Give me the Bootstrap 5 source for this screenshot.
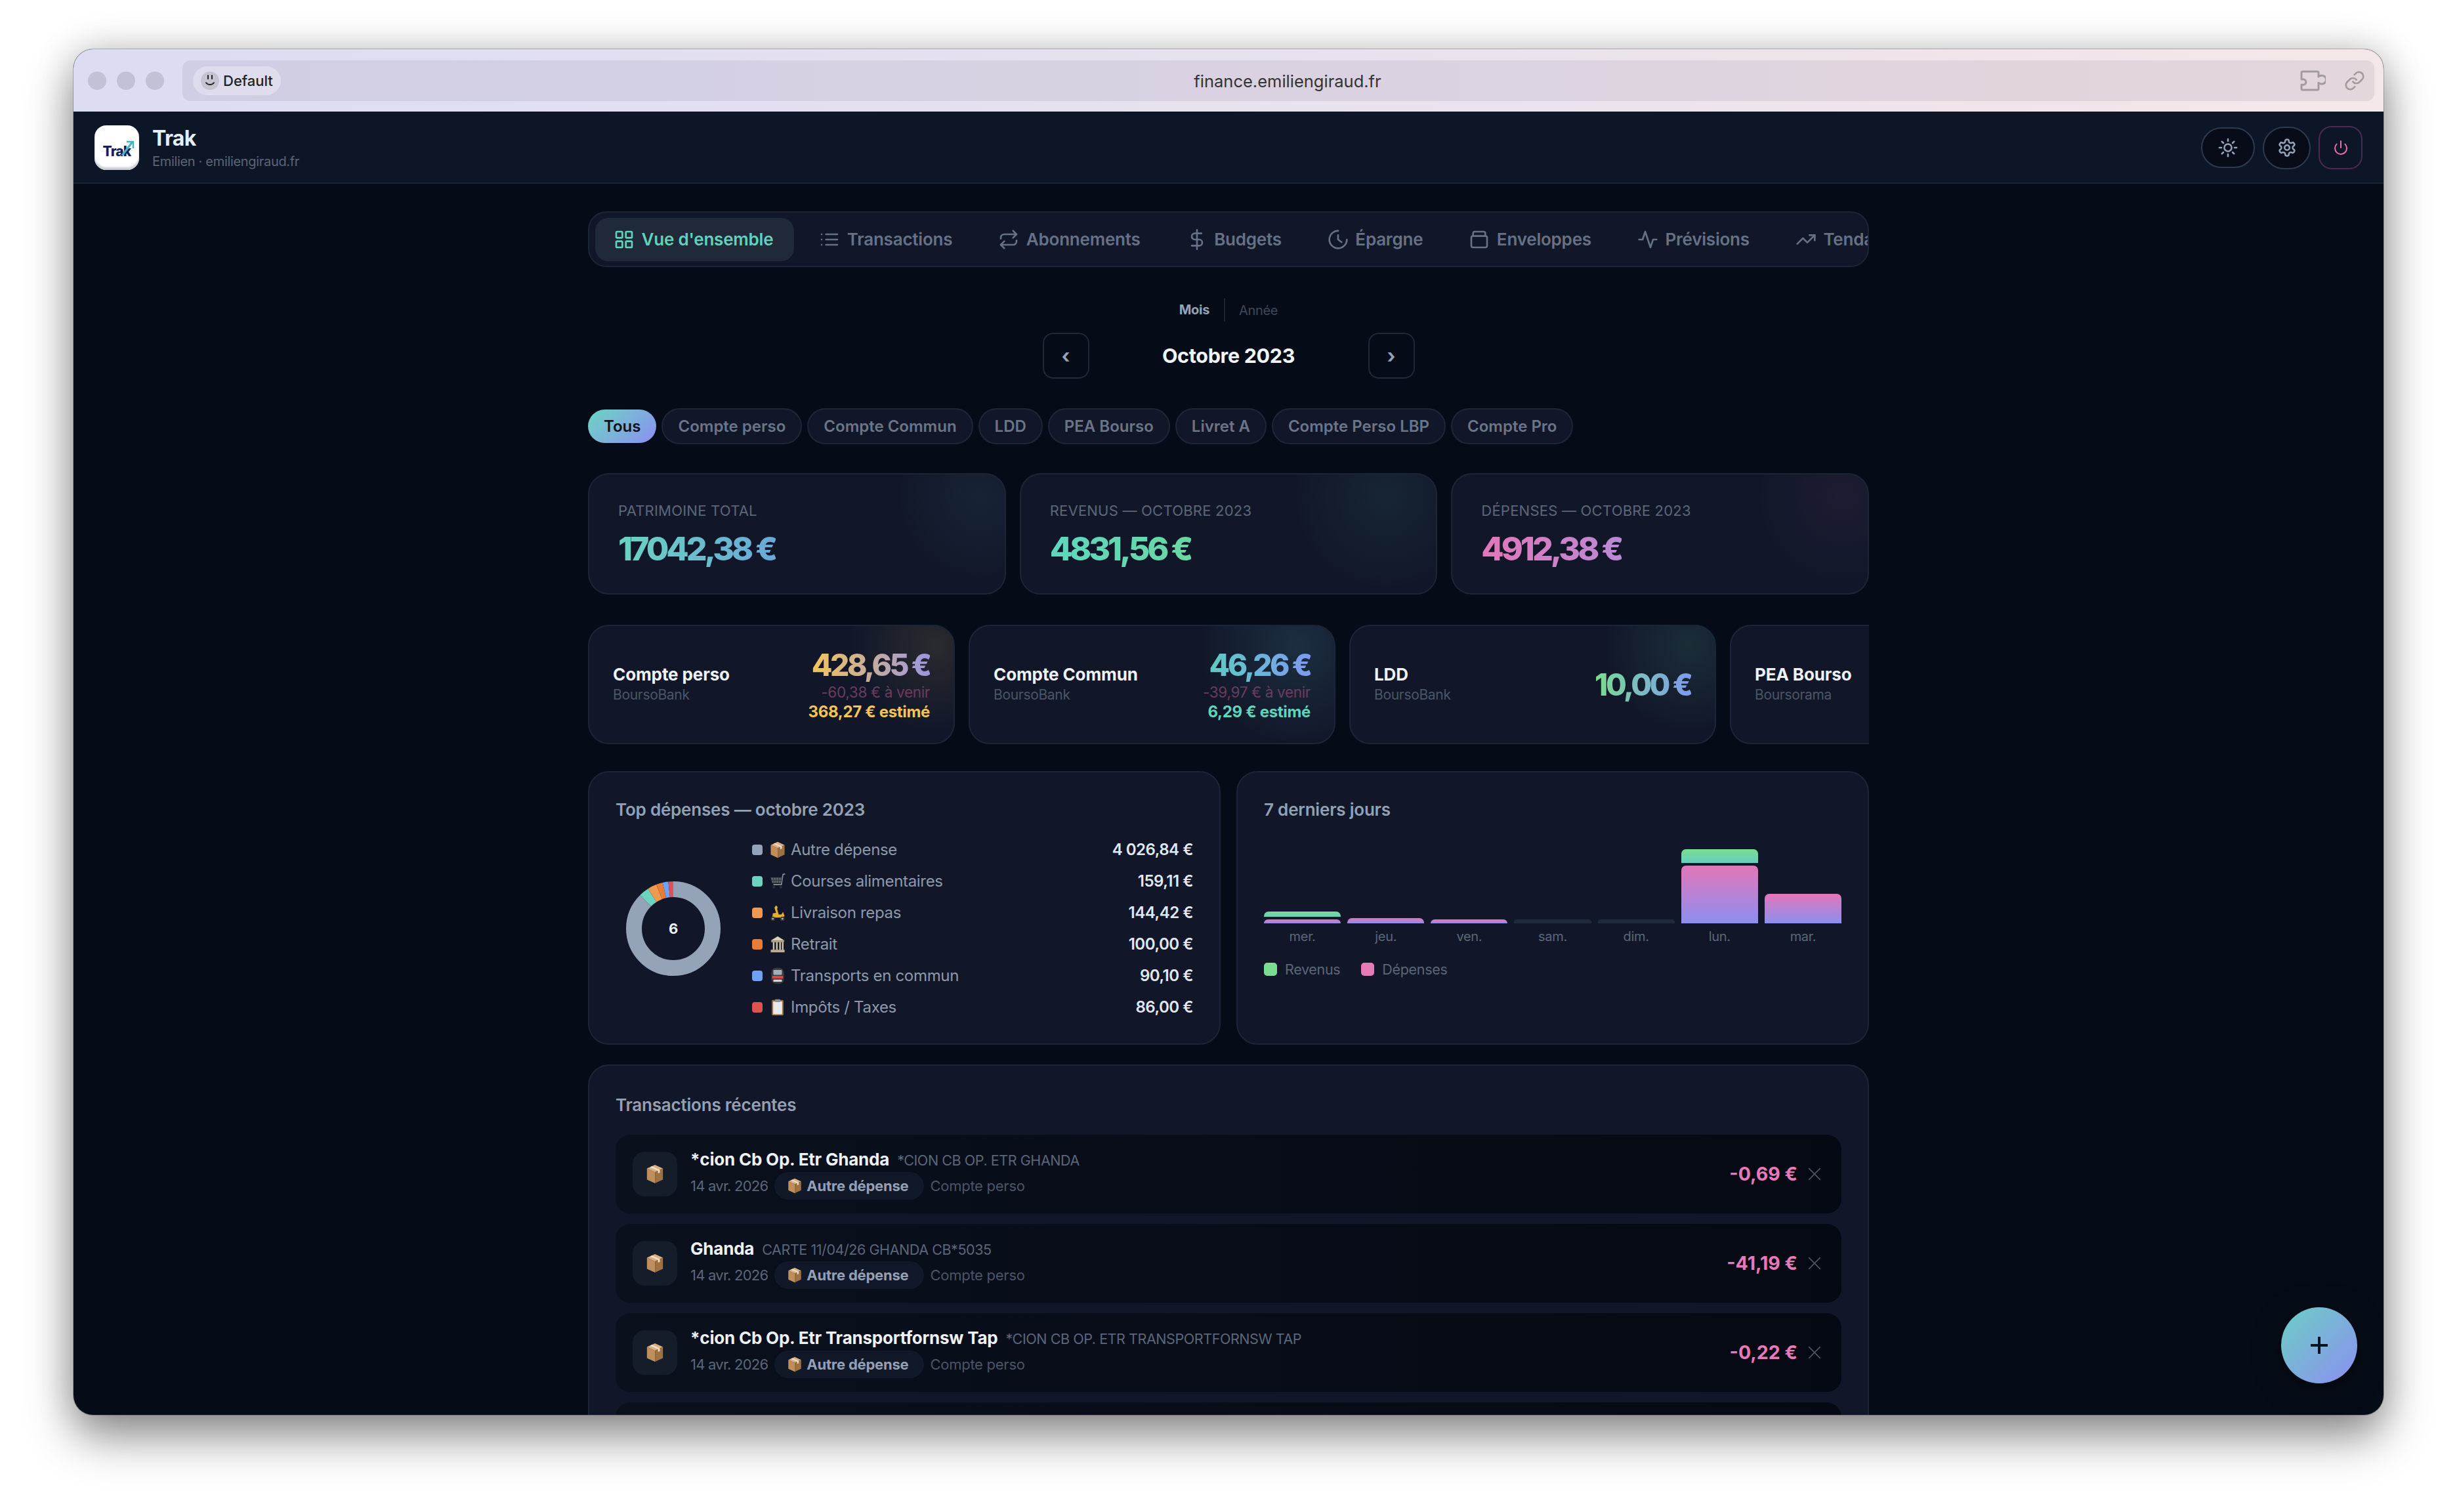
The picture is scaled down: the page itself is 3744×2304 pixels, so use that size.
<!DOCTYPE html>
<html lang="fr">
<head>
<meta charset="UTF-8">
<title>Trak</title>
<link href="https://cdn.jsdelivr.net/npm/bootstrap@5.3.0/dist/css/bootstrap.min.css" rel="stylesheet">
<style>
html, body { height: 2304px; overflow: hidden; background: #fff; }
body { font-family: Inter, "Noto Sans", sans-serif; color: #e2e8f0; letter-spacing: -0.02em; }
.ico { fill: none; stroke: currentColor; stroke-width: 2; stroke-linecap: round; stroke-linejoin: round; flex: none; }

.mac-window { width: 3520px; height: 2081px; margin: 75px auto 0; border-radius: 30px; overflow: hidden; position: relative; background: #060c17; box-shadow: 0 0 0 1px rgba(0,0,0,.22), 0 34px 70px rgba(0,0,0,.42), 0 0 60px rgba(0,0,0,.18); }
.mac-bar { height: 95px; padding: 17px 14px 16px 22px; background: linear-gradient(90deg, #dcdcf3, #f3e7e9); }
.mac-dots { gap: 16px; margin-right: 28px; }
.mac-dots i { width: 28px; height: 28px; border-radius: 50%; background: #c2c2d6; display: block; }
.mac-url { flex: 1; height: 62px; border-radius: 12px; background: rgba(120,110,140,.13); padding: 0 14px 0 16px; position: relative; }
.mac-profile { height: 44px; padding: 0 12px; border-radius: 22px; background: rgba(255,255,255,.3); color: #222; font-size: 22px; font-weight: 500; gap: 6px; letter-spacing: 0; }
.mac-face { width: 28px; height: 28px; border-radius: 50%; background: #c6c4d2; }
.mac-domain { position: absolute; left: 28px; right: 0; top: 16px; text-align: center; font-size: 25.5px; line-height: 32px; color: #333; letter-spacing: 0; }
.mac-tools { margin-left: auto; gap: 28px; color: #a29b9c; }

.app-head { height: 110px; padding: 2px 0 0; background: #0d1626; border-bottom: 2px solid #1b2435; }
.head-left { margin-left: 32px; }
.app-logo { width: 68px; height: 68px; border-radius: 18px; background: #fff; box-shadow: inset 0 -4px 3px #c9ccd2; position: relative; margin-right: 20px; color: #14205c; font-size: 21px; font-weight: 800; padding-top: 24px; text-align: center; letter-spacing: -.04em; }
.app-logo svg { position: absolute; right: 6px; top: 20px; }
.app-name { font-size: 32px; font-weight: 700; line-height: 38px; color: #e8edf5; letter-spacing: -.02em; }
.app-sub { font-size: 20px; line-height: 26px; margin-top: 3px; color: #5b6579; }
.head-tools { gap: 12px; margin-right: 32px; }
.head-btn { padding: 0; background: #070c18; border: 2px solid #2e3a4e; border-radius: 40px; color: #94a3b8; display: flex; align-items: center; justify-content: center; }
.head-sun { width: 82px; height: 62px; }
.head-gear { width: 73px; height: 65px; }
.head-power { width: 67px; height: 66px; border-radius: 20px; border-color: #4a2a50; background: transparent; color: #ec6fb3; }

.page-wrap { width: 1952px; margin: 0 auto; padding-top: 42px; }
.tab-bar { height: 85px; padding: 0 9px; background: #111729; border: 2px solid #1c2536; border-radius: 28px; overflow: hidden; flex-wrap: nowrap; gap: 10px; align-items: center; }
.tab-bar .nav-link { height: 66px; padding: 0 32px; border-radius: 20px; display: flex; align-items: center; gap: 14.5px; font-size: 26px; font-weight: 600; color: #677186; white-space: nowrap; flex: none; letter-spacing: -.008em; }
.tab-bar .nav-link svg { width: 32px; height: 32px; margin: 0 -4px; }
.tab-bar .nav-link.active { background: #1f2937; color: #5fd3bb; }

.period-switch { margin-top: 48px; height: 35px; font-size: 20px; }
.period-switch b { font-weight: 700; color: #94a3b8; padding-right: 22px; border-right: 2px solid #1c2536; line-height: 35px; }
.period-switch span { color: #3f4859; padding-left: 21px; }
.month-nav { margin-top: 17px; height: 70px; gap: 0; }
.month-btn { width: 71px; height: 70px; padding: 0; background: transparent; border: 2px solid #1f2938; border-radius: 16px; color: #94a3b8; font-size: 30px; font-weight: 700; line-height: 1; }
.month-title { width: 425px; text-align: center; font-size: 30.5px; font-weight: 700; color: #f1f5f9; }

.filter-row { margin-top: 45px; height: 55px; gap: 8px; }
.filter-pill { height: 55px; padding: 0 23px; background: #111729; border: 2px solid #1e2636; border-radius: 28px; color: #6b7588; font-size: 24px; font-weight: 600; white-space: nowrap; letter-spacing: 0; }
.filter-pill.on { height: 51px; padding: 0 24px; border: 0; color: #0b1220; background: linear-gradient(135deg, #6cd4c4, #8b90f0); }

.tile { background-color: #111729; border: 2px solid #1c2536; border-radius: 32px; color: inherit; }
.stat-grid { margin-top: 44px; display: grid; grid-template-columns: repeat(3, 1fr); gap: 21px; }
.stat-tile { height: 185px; padding: 2px 44px 0; justify-content: center; }
.stat-tile small { font-size: 22px; color: #5c6679; letter-spacing: .01em; line-height: 28px; }
.stat-val { font-size: 50px; font-weight: 800; letter-spacing: -.08em; line-height: 60px; margin-top: 14px; }
.grad-text { -webkit-background-clip: text; background-clip: text; color: transparent; display: inline-block; }
.g-teal { background-image: linear-gradient(90deg, #6ad3c0, #6aa8d8); }
.g-green { background-image: linear-gradient(90deg, #5fd6c0, #68d8a2); }
.g-pink { background-image: linear-gradient(90deg, #e476b8, #b98ad5); }
.g-gold { background-image: linear-gradient(90deg, #f2c45a, #9a96e0); }
.g-sea { background-image: linear-gradient(90deg, #5ecbc2, #7d9bf0); }
.g-leaf { background-image: linear-gradient(90deg, #7adc90, #7d9bf0); }
.glow-a { background-image: radial-gradient(circle 125px at 94% 19%, rgba(100,200,210,.07), transparent); }
.glow-b { background-image: radial-gradient(circle 140px at 88% 19%, rgba(100,220,180,.07), transparent); }
.glow-c { background-image: radial-gradient(circle 130px at 94% 19%, rgba(230,110,190,.06), transparent); }
.glow-d { background-image: radial-gradient(circle 130px at 95% 17%, rgba(245,200,90,.11), transparent); }
.glow-e { background-image: radial-gradient(circle 150px at 90% 17%, rgba(100,200,220,.13), transparent); }
.glow-f { background-image: radial-gradient(circle 130px at 93% 17%, rgba(110,220,170,.11), transparent); }

.acct-scroll { margin-top: 46px; gap: 21px; overflow: hidden; }
.acct-tile { width: 559px; height: 182px; flex: none; flex-direction: row; align-items: center; padding: 0 36px; }
.acct-name { font-size: 26px; font-weight: 700; line-height: 32px; color: #eef2f7; letter-spacing: -.004em; }
.acct-bank { font-size: 21px; line-height: 30px; color: #4b5567; }
.acct-vals { margin-left: auto; text-align: right; }
.acct-val { font-size: 46px; font-weight: 800; letter-spacing: -.075em; line-height: 54px; }
.acct-due { font-size: 22.5px; color: #6b3c5e; line-height: 30px; }
.acct-est { font-size: 24px; font-weight: 700; line-height: 30px; }

.chart-grid { margin-top: 41px; display: grid; grid-template-columns: repeat(2, 1fr); gap: 24px; }
.chart-tile { height: 417px; padding: 41px 40px 0; }
.tile-title { font-size: 26px; font-weight: 600; line-height: 32px; color: #94a0b3; letter-spacing: -.008em; }
.chart-body { margin-top: 21px; }
.donut-box { width: 144px; height: 144px; margin: 0 48px 0 16px; flex: none; }
.donut-box text { font-size: 22px; font-weight: 700; fill: #eef2f7; }
.cat-list { flex: 1; }
.cat-row { height: 48px; font-size: 24px; color: #8d98ab; }
.cat-swatch { width: 16px; height: 16px; border-radius: 4px; margin-right: 10px; flex: none; }
.cat-row svg { margin-right: 7px; flex: none; }
.cat-row b { margin-left: auto; font-weight: 600; color: #e2e8f0; letter-spacing: -.02em; }

.bars { height: 136px; margin-top: 21px; gap: 10px; align-items: flex-end; }
.bars > div { flex: 1; display: flex; flex-direction: column; gap: 4px; }
.bar-in { background: linear-gradient(180deg, #7adc90, #66cfc0); border-radius: 7px 7px 0 0; }
.bar-out { background: linear-gradient(180deg, #e476b8, #8b8ff0); border-radius: 7px 7px 0 0; }
.bar-none { background: #1e293b; border-radius: 4px 4px 0 0; }
.bar-labels { gap: 10px; margin-top: 8px; font-size: 20px; line-height: 24px; color: #5c6679; text-align: center; }
.bar-labels span { flex: 1; }
.bar-key { margin-top: 26px; font-size: 21.5px; color: #5c6679; line-height: 24px; }
.bar-key i { width: 20px; height: 20px; border-radius: 5px; margin-right: 12px; display: block; }
.bar-key span { margin-right: 32px; }

.recent-tile { margin-top: 30px; height: 700px; padding: 44px 40px 0; }
.recent-list { margin-top: 29px; gap: 16px; }
.tx-row { height: 120px; flex: none; padding: 0 31px 0 26px; background: linear-gradient(90deg, #0a101c, #050914); border-radius: 22px; }
.tx-icon { width: 68px; height: 68px; border-radius: 18px; background: #151c2a; margin-right: 20px; flex: none; }
.tx-name { font-size: 26px; font-weight: 700; line-height: 34px; color: #eef2f7; letter-spacing: -.008em; }
.tx-desc { font-size: 21.5px; color: #5c6679; margin-left: 12px; letter-spacing: -.02em; }
.tx-meta { font-size: 22px; color: #5c6679; margin-top: 1px; }
.tx-date { letter-spacing: -.035em; }
.tx-cat { height: 42px; padding: 0 24px 0 19px; margin: 0 9px 0 10px; border-radius: 21px; background: #111827; font-weight: 700; color: #94a0b3; gap: 6px; letter-spacing: -.01em; }
.tx-acct { color: #4b5567; letter-spacing: -.012em; }
.tx-amt { margin-left: auto; font-size: 28.5px; font-weight: 700; color: #e879b9; letter-spacing: 0; }
.tx-x { margin-left: 16px; color: #4b5563; }

.fab-add { position: absolute; right: 40px; bottom: 48px; width: 116px; height: 116px; padding: 0; border: 0; border-radius: 50%; color: #0b1220; background: linear-gradient(135deg, #6ccfc4, #8b8ff0); box-shadow: 0 8px 40px rgba(0,0,0,.5); }
</style>
</head>
<body>
<svg width="0" height="0" class="position-absolute">
  <symbol id="e-box" viewBox="0 0 32 32"><polygon points="16,1 29,7 16,13 3,7" fill="#dcb084"/><polygon points="3,7 16,13 16,31 3,25" fill="#c08e5b"/><polygon points="29,7 16,13 16,31 29,25" fill="#9e7143"/><polygon points="8,4.7 21,10.7 21,15 24,13.6 24,9.3 11,3.3" fill="#efe0c8"/><polygon points="16,13 18,12 18,31 16,31" fill="#8a6038" opacity=".5"/></symbol>
  <symbol id="e-cart" viewBox="0 0 32 32"><path d="M30 2l-4 1-3 19H8" fill="none" stroke="#8f949c" stroke-width="2"/><path d="M3 9h22l-2 10H6z" fill="#5f646c"/><path d="M8 9l1 10M13 9v10M18 9v10M23 9l-1 10M4 14h20" stroke="#2f333a" stroke-width="1.2"/><circle cx="9" cy="27" r="2.6" fill="#2c2f35"/><circle cx="22" cy="27" r="2.6" fill="#2c2f35"/></symbol>
  <symbol id="e-scoot" viewBox="0 0 32 32"><path d="M13 2l3 3-1 4 3 10h5l3-5 3 8c-3 3-12 3-17 3l-6-1 1-7 6-1-3-10z" fill="#e2b02e"/><circle cx="7" cy="27" r="4" fill="#3c3c3c"/><circle cx="25" cy="27" r="4" fill="#3c3c3c"/><circle cx="7" cy="27" r="1.6" fill="#bbb"/><circle cx="25" cy="27" r="1.6" fill="#bbb"/></symbol>
  <symbol id="e-bank" viewBox="0 0 32 32"><polygon points="16,1 29,9 3,9" fill="#d8cfb4"/><rect x="4" y="9" width="24" height="3" fill="#b9ae90"/><path d="M7 12h3v14H7zM13 12h3v14h-3zM19 12h3v14h-3zM24 12h3v14h-3z" fill="#cfc5a8"/><rect x="3" y="26" width="26" height="5" fill="#b9ae90"/></symbol>
  <symbol id="e-metro" viewBox="0 0 32 32"><rect x="4" y="1" width="24" height="30" rx="9" fill="#3a3a3e"/><rect x="8" y="5" width="16" height="9" rx="1.5" fill="#9fb0bd"/><rect x="6" y="16" width="20" height="5" fill="#d9473f"/><rect x="8" y="23" width="16" height="4" rx="1" fill="#d5d5d5"/></symbol>
  <symbol id="e-clip" viewBox="0 0 32 32"><rect x="5" y="2" width="22" height="29" rx="2" fill="#9a6e3f"/><rect x="7.5" y="5" width="17" height="24" fill="#e6e8ea"/><rect x="11" y="1" width="10" height="5" rx="1" fill="#8d9097"/></symbol>
  <symbol id="i-x" viewBox="0 0 24 24"><path d="M2 2l20 20M22 2L2 22"/></symbol>
</svg>

<div class="mac-window">
  <div class="mac-bar d-flex align-items-stretch">
    <div class="mac-dots d-flex align-items-center"><i></i><i></i><i></i></div>
    <div class="mac-url d-flex align-items-center">
      <div class="mac-profile d-flex align-items-center">
        <span class="mac-face d-flex align-items-center justify-content-center">
          <svg width="18" height="20" viewBox="0 0 18 20" fill="none" stroke="#222" stroke-width="2" stroke-linecap="round"><path d="M6 2v5M12 2v5M3 13c3 4 9 4 12 0"/></svg>
        </span>
        Default
      </div>
      <div class="mac-domain">finance.emiliengiraud.fr</div>
      <div class="mac-tools d-flex align-items-center">
        <svg width="40" height="32" viewBox="0 0 40 32" fill="none" stroke="currentColor" stroke-width="3" stroke-linejoin="round"><path d="M3 4a2 2 0 0 1 2-2h22a2 2 0 0 1 2 2v6c1-1 3-2 5-2a6 6 0 0 1 0 13c-2 0-4-1-5-2v9a2 2 0 0 1-2 2H5a2 2 0 0 1-2-2v-6c4 1 7-1 7-4s-3-5-7-4z"/></svg>
        <svg class="ico" width="32" height="32" viewBox="0 0 24 24"><path d="M10 13a5 5 0 0 0 7.54.54l3-3a5 5 0 0 0-7.07-7.07l-1.72 1.71"/><path d="M14 11a5 5 0 0 0-7.54-.54l-3 3a5 5 0 0 0 7.07 7.07l1.71-1.71"/></svg>
      </div>
    </div>
  </div>

  <header class="app-head navbar flex-nowrap">
    <div class="head-left d-flex align-items-center">
      <div class="app-logo">Trak
        <svg width="24" height="28" viewBox="0 0 24 28" fill="none" stroke="#3fb6c4" stroke-width="3"><path d="M4 26L20 5"/><path d="M11 5h10v10" stroke-width="2.5"/></svg>
      </div>
      <div>
        <div class="app-name">Trak</div>
        <div class="app-sub">Emilien · emiliengiraud.fr</div>
      </div>
    </div>
    <div class="head-tools d-flex align-items-center">
      <button class="btn head-btn head-sun" aria-label="Thème"><svg class="ico" width="30" height="30" viewBox="0 0 24 24"><circle cx="12" cy="12" r="4.5"/><path d="M12 1.5v2.5M12 20v2.5M1.5 12H4M20 12h2.5M4.6 4.6l1.8 1.8M17.6 17.6l1.8 1.8M4.6 19.4l1.8-1.8M17.6 6.4l1.8-1.8"/></svg></button>
      <button class="btn head-btn head-gear" aria-label="Réglages"><svg class="ico" width="30" height="30" viewBox="0 0 24 24"><path d="M12.22 2h-.44a2 2 0 0 0-2 2v.18a2 2 0 0 1-1 1.73l-.43.25a2 2 0 0 1-2 0l-.15-.08a2 2 0 0 0-2.73.73l-.22.38a2 2 0 0 0 .73 2.73l.15.1a2 2 0 0 1 1 1.72v.51a2 2 0 0 1-1 1.74l-.15.09a2 2 0 0 0-.73 2.73l.22.38a2 2 0 0 0 2.73.73l.15-.08a2 2 0 0 1 2 0l.43.25a2 2 0 0 1 1 1.73V20a2 2 0 0 0 2 2h.44a2 2 0 0 0 2-2v-.18a2 2 0 0 1 1-1.73l.43-.25a2 2 0 0 1 2 0l.15.08a2 2 0 0 0 2.73-.73l.22-.39a2 2 0 0 0-.73-2.73l-.15-.08a2 2 0 0 1-1-1.74v-.5a2 2 0 0 1 1-1.74l.15-.09a2 2 0 0 0 .73-2.73l-.22-.38a2 2 0 0 0-2.73-.73l-.15.08a2 2 0 0 1-2 0l-.43-.25a2 2 0 0 1-1-1.73V4a2 2 0 0 0-2-2z"/><circle cx="12" cy="12" r="3"/></svg></button>
      <button class="btn head-btn head-power" aria-label="Déconnexion"><svg class="ico" width="24" height="24" viewBox="0 0 24 24"><path d="M12 2v10"/><path d="M18.4 6.6a9 9 0 1 1-12.77.04"/></svg></button>
    </div>
  </header>

  <main class="page-wrap">
    <nav class="nav tab-bar">
      <a class="nav-link active" href="#"><svg class="ico" viewBox="0 0 24 24"><rect x="3" y="3" width="7" height="7" rx="1"/><rect x="14" y="3" width="7" height="7" rx="1"/><rect x="14" y="14" width="7" height="7" rx="1"/><rect x="3" y="14" width="7" height="7" rx="1"/></svg>Vue d'ensemble</a>
      <a class="nav-link" href="#"><svg class="ico" viewBox="0 0 24 24"><path d="M8 6h13M8 12h13M8 18h13M3 6h.01M3 12h.01M3 18h.01"/></svg>Transactions</a>
      <a class="nav-link" href="#"><svg class="ico" viewBox="0 0 24 24"><path d="m17 2 4 4-4 4"/><path d="M3 11v-1a4 4 0 0 1 4-4h14"/><path d="m7 22-4-4 4-4"/><path d="M21 13v1a4 4 0 0 1-4 4H3"/></svg>Abonnements</a>
      <a class="nav-link" href="#"><svg class="ico" viewBox="0 0 24 24"><path d="M12 1v22"/><path d="M17 5H9.5a3.5 3.5 0 0 0 0 7h5a3.5 3.5 0 0 1 0 7H6"/></svg>Budgets</a>
      <a class="nav-link" href="#"><svg class="ico" viewBox="0 0 24 24"><path d="M12 2a10 10 0 1 0 10 10"/><path d="M12 7v5l4 3"/></svg>Épargne</a>
      <a class="nav-link" href="#"><svg class="ico" viewBox="0 0 24 24"><rect x="3" y="8" width="18" height="13" rx="2"/><path d="M5 8V5a2 2 0 0 1 2-2h10a2 2 0 0 1 2 2v3"/></svg>Enveloppes</a>
      <a class="nav-link" href="#"><svg class="ico" viewBox="0 0 24 24"><path d="M22 12h-4l-3 9L9 3l-3 9H2"/></svg>Prévisions</a>
      <a class="nav-link" href="#"><svg class="ico" viewBox="0 0 24 24"><path d="M22 7l-8.5 8.5-5-5L2 17"/><path d="M16 7h6v6"/></svg>Tendances</a>
    </nav>

    <div class="period-switch d-flex justify-content-center align-items-center"><b>Mois</b><span>Année</span></div>

    <div class="month-nav d-flex justify-content-center align-items-center">
      <button class="btn month-btn">‹</button>
      <div class="month-title">Octobre 2023</div>
      <button class="btn month-btn">›</button>
    </div>

    <div class="filter-row d-flex align-items-center">
      <button class="btn filter-pill on">Tous</button>
      <button class="btn filter-pill">Compte perso</button>
      <button class="btn filter-pill">Compte Commun</button>
      <button class="btn filter-pill">LDD</button>
      <button class="btn filter-pill">PEA Bourso</button>
      <button class="btn filter-pill">Livret A</button>
      <button class="btn filter-pill">Compte Perso LBP</button>
      <button class="btn filter-pill">Compte Pro</button>
    </div>

    <section class="stat-grid">
      <div class="card tile stat-tile glow-a"><small>PATRIMOINE TOTAL</small><div><span class="stat-val grad-text g-teal">17042,38 €</span></div></div>
      <div class="card tile stat-tile glow-b"><small>REVENUS — OCTOBRE 2023</small><div><span class="stat-val grad-text g-green">4831,56 €</span></div></div>
      <div class="card tile stat-tile glow-c"><small>DÉPENSES — OCTOBRE 2023</small><div><span class="stat-val grad-text g-pink">4912,38 €</span></div></div>
    </section>

    <section class="acct-scroll d-flex">
      <div class="card tile acct-tile glow-d">
        <div><div class="acct-name">Compte perso</div><div class="acct-bank">BoursoBank</div></div>
        <div class="acct-vals"><span class="acct-val grad-text g-gold">428,65 €</span><div class="acct-due">-60,38 € à venir</div><div class="acct-est" style="color:#f6c453">368,27 € estimé</div></div>
      </div>
      <div class="card tile acct-tile glow-e">
        <div><div class="acct-name">Compte Commun</div><div class="acct-bank">BoursoBank</div></div>
        <div class="acct-vals"><span class="acct-val grad-text g-sea">46,26 €</span><div class="acct-due">-39,97 € à venir</div><div class="acct-est" style="color:#5fd6bb">6,29 € estimé</div></div>
      </div>
      <div class="card tile acct-tile glow-f">
        <div><div class="acct-name">LDD</div><div class="acct-bank">BoursoBank</div></div>
        <div class="acct-vals"><span class="acct-val grad-text g-leaf">10,00 €</span></div>
      </div>
      <div class="card tile acct-tile">
        <div><div class="acct-name">PEA Bourso</div><div class="acct-bank">Boursorama</div></div>
      </div>
    </section>

    <section class="chart-grid">
      <div class="card tile chart-tile">
        <div class="tile-title">Top dépenses — octobre 2023</div>
        <div class="chart-body d-flex align-items-center">
          <svg class="donut-box" viewBox="0 0 144 144">
            <g fill="none" stroke-width="24" transform="rotate(-90 72 72)">
              <circle cx="72" cy="72" r="60" stroke="#94a3b8" stroke-dasharray="329.56 376.99"/>
              <circle cx="72" cy="72" r="60" stroke="#6bd4c0" stroke-dasharray="13.02 376.99" stroke-dashoffset="-329.56"/>
              <circle cx="72" cy="72" r="60" stroke="#f09a50" stroke-dasharray="11.82 376.99" stroke-dashoffset="-342.58"/>
              <circle cx="72" cy="72" r="60" stroke="#ea7d35" stroke-dasharray="8.18 376.99" stroke-dashoffset="-354.4"/>
              <circle cx="72" cy="72" r="60" stroke="#6ea2f5" stroke-dasharray="7.37 376.99" stroke-dashoffset="-362.58"/>
              <circle cx="72" cy="72" r="60" stroke="#e0524f" stroke-dasharray="7.04 376.99" stroke-dashoffset="-369.95"/>
            </g>
            <text x="72" y="80" text-anchor="middle">6</text>
          </svg>
          <div class="cat-list">
            <div class="cat-row d-flex align-items-center"><span class="cat-swatch" style="background:#94a3b8"></span><svg width="26" height="26"><use href="#e-box"/></svg>Autre dépense<b>4 026,84 €</b></div>
            <div class="cat-row d-flex align-items-center"><span class="cat-swatch" style="background:#6bd4c0"></span><svg width="26" height="26"><use href="#e-cart"/></svg>Courses alimentaires<b>159,11 €</b></div>
            <div class="cat-row d-flex align-items-center"><span class="cat-swatch" style="background:#f09a50"></span><svg width="26" height="26"><use href="#e-scoot"/></svg>Livraison repas<b>144,42 €</b></div>
            <div class="cat-row d-flex align-items-center"><span class="cat-swatch" style="background:#ea7d35"></span><svg width="26" height="26"><use href="#e-bank"/></svg>Retrait<b>100,00 €</b></div>
            <div class="cat-row d-flex align-items-center"><span class="cat-swatch" style="background:#6ea2f5"></span><svg width="26" height="26"><use href="#e-metro"/></svg>Transports en commun<b>90,10 €</b></div>
            <div class="cat-row d-flex align-items-center"><span class="cat-swatch" style="background:#e0524f"></span><svg width="26" height="26"><use href="#e-clip"/></svg>Impôts / Taxes<b>86,00 €</b></div>
          </div>
        </div>
      </div>

      <div class="card tile chart-tile">
        <div class="tile-title">7 derniers jours</div>
        <div class="bars d-flex">
          <div><div class="bar-in" style="height:8px"></div><div class="bar-out" style="height:6px"></div></div>
          <div><div class="bar-out" style="height:8px"></div></div>
          <div><div class="bar-out" style="height:6px"></div></div>
          <div><div class="bar-none" style="height:6px"></div></div>
          <div><div class="bar-none" style="height:6px"></div></div>
          <div><div class="bar-in" style="height:21px"></div><div class="bar-out" style="height:88px"></div></div>
          <div><div class="bar-out" style="height:45px"></div></div>
        </div>
        <div class="bar-labels d-flex"><span>mer.</span><span>jeu.</span><span>ven.</span><span>sam.</span><span>dim.</span><span>lun.</span><span>mar.</span></div>
        <div class="bar-key d-flex align-items-center">
          <i style="background:#7adc90"></i><span>Revenus</span>
          <i style="background:#e77bb8"></i><span>Dépenses</span>
        </div>
      </div>
    </section>

    <section class="card tile recent-tile">
      <div class="tile-title">Transactions récentes</div>
      <div class="recent-list d-flex flex-column">
        <div class="tx-row d-flex align-items-center">
          <div class="tx-icon d-flex align-items-center justify-content-center"><svg width="30" height="30"><use href="#e-box"/></svg></div>
          <div>
            <div class="tx-name">*cion Cb Op. Etr Ghanda<span class="tx-desc fw-normal">*CION CB OP. ETR GHANDA</span></div>
            <div class="tx-meta d-flex align-items-center"><span class="tx-date">14 avr. 2026</span><span class="tx-cat d-flex align-items-center"><svg width="24" height="24"><use href="#e-box"/></svg>Autre dépense</span><span class="tx-acct">Compte perso</span></div>
          </div>
          <div class="tx-amt">-0,69 €</div>
          <svg class="ico tx-x" width="20" height="20"><use href="#i-x"/></svg>
        </div>
        <div class="tx-row d-flex align-items-center">
          <div class="tx-icon d-flex align-items-center justify-content-center"><svg width="30" height="30"><use href="#e-box"/></svg></div>
          <div>
            <div class="tx-name">Ghanda<span class="tx-desc fw-normal">CARTE 11/04/26 GHANDA CB*5035</span></div>
            <div class="tx-meta d-flex align-items-center"><span class="tx-date">14 avr. 2026</span><span class="tx-cat d-flex align-items-center"><svg width="24" height="24"><use href="#e-box"/></svg>Autre dépense</span><span class="tx-acct">Compte perso</span></div>
          </div>
          <div class="tx-amt">-41,19 €</div>
          <svg class="ico tx-x" width="20" height="20"><use href="#i-x"/></svg>
        </div>
        <div class="tx-row d-flex align-items-center">
          <div class="tx-icon d-flex align-items-center justify-content-center"><svg width="30" height="30"><use href="#e-box"/></svg></div>
          <div>
            <div class="tx-name">*cion Cb Op. Etr Transportfornsw Tap<span class="tx-desc fw-normal">*CION CB OP. ETR TRANSPORTFORNSW TAP</span></div>
            <div class="tx-meta d-flex align-items-center"><span class="tx-date">14 avr. 2026</span><span class="tx-cat d-flex align-items-center"><svg width="24" height="24"><use href="#e-box"/></svg>Autre dépense</span><span class="tx-acct">Compte perso</span></div>
          </div>
          <div class="tx-amt">-0,22 €</div>
          <svg class="ico tx-x" width="20" height="20"><use href="#i-x"/></svg>
        </div>
        <div class="tx-row"></div>
      </div>
    </section>
  </main>

  <button class="btn fab-add d-flex align-items-center justify-content-center" aria-label="Ajouter"><svg width="30" height="30" viewBox="0 0 30 30" stroke="currentColor" stroke-width="4"><path d="M15 2v26M2 15h26"/></svg></button>
</div>
</body>
</html>
